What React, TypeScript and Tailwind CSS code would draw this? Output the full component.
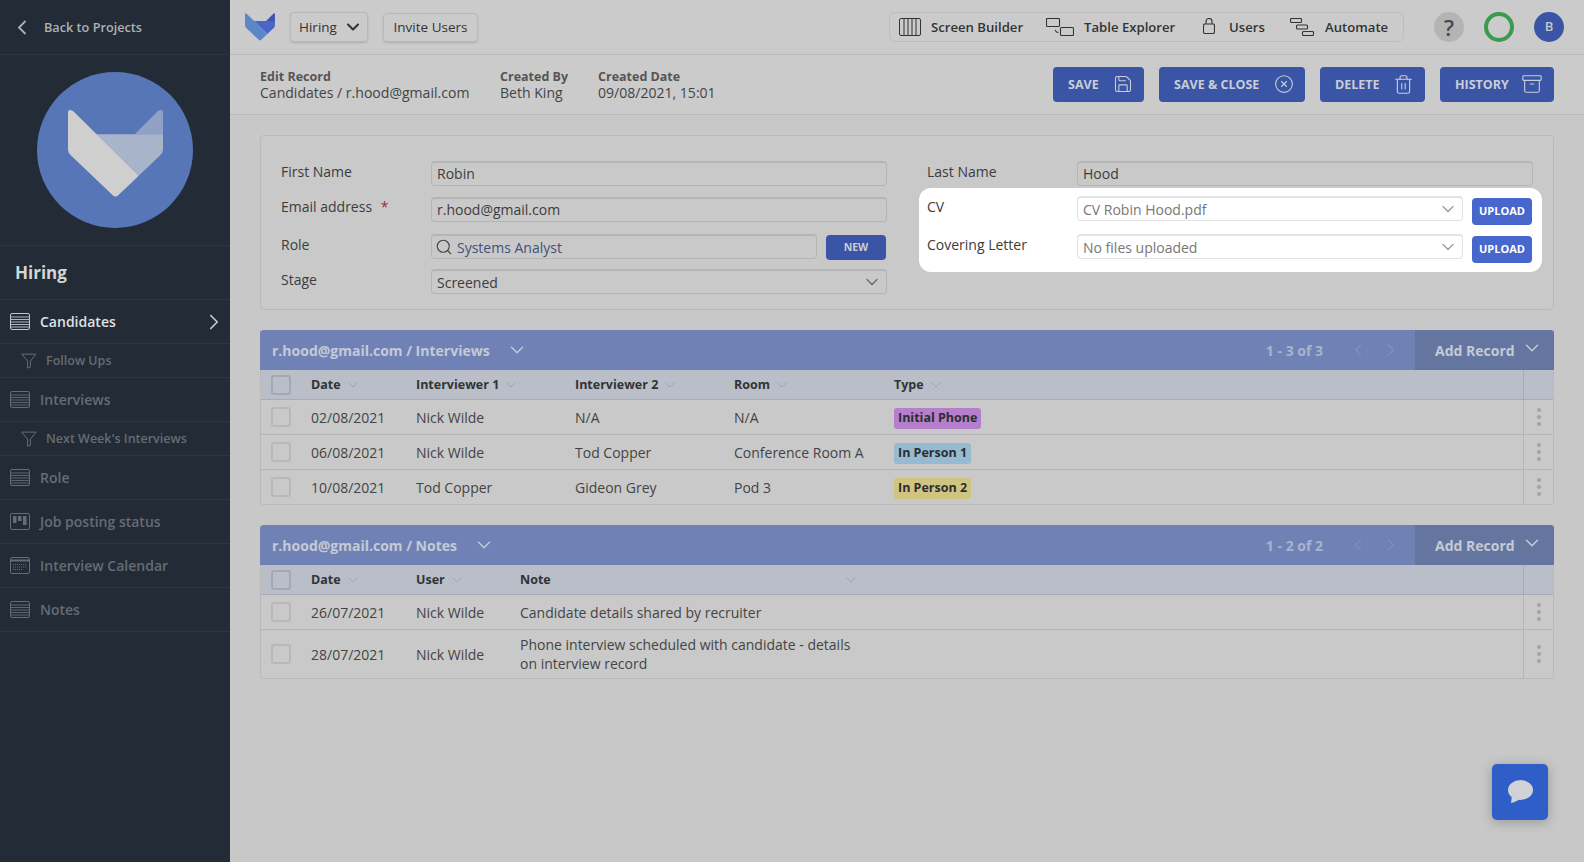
import React from "react";
import { ChevronLeft, ChevronRight, ChevronDown, Search, Save, CircleX, Trash2, Archive } from "lucide-react";

function Fox({ a, b, c, className }: { a: string; b: string; c: string; className: string }) {
  return (
    <svg viewBox="0 0 94 88" className={className}>
      <path d="M66 25 L89 2 Q94 -1 94 4 V25 Z" fill={c} />
      <path d="M28 25 H94 V40 Q94 43 91 46 L70 66 Z" fill={b} />
      <path d="M0 4 Q0 -1 5 2 L70 66 L50 85 Q47 88 44 85 L3 46 Q0 43 0 40 Z" fill={a} />
    </svg>
  );
}

function GridIcon({ kind, color }: { kind: "table" | "board" | "cal"; color: string }) {
  return (
    <svg viewBox="0 0 20 17" className="w-5 h-[17px] shrink-0" fill="none" stroke={color}>
      <rect x="0.5" y="0.5" width="19" height="16" rx="1.5" />
      {kind === "table" && (
        <g strokeWidth="0.9">
          <path d="M1 4h18M1 6.5h18M1 9h18M1 11.5h18M1 14h18" />
        </g>
      )}
      {kind === "board" && (
        <g fill={color} stroke="none">
          <rect x="3" y="3" width="3.5" height="7" />
          <rect x="8" y="3" width="3.5" height="5" />
          <rect x="13" y="3" width="3.5" height="9" />
        </g>
      )}
      {kind === "cal" && (
        <g>
          <path d="M1 3.5h18" strokeWidth="2" />
          <path d="M3 7.5h14M3 10h14M3 12.5h9" strokeWidth="1.2" strokeDasharray="1 1" />
        </g>
      )}
    </svg>
  );
}

function Funnel() {
  return (
    <svg viewBox="0 0 17 16" className="w-4 h-4 shrink-0" fill="none" stroke="#6c7079" strokeWidth="1">
      <path d="M0.7 0.7 H16 L10 8 V14.5 L7 15.5 V8 Z" strokeLinejoin="round" />
    </svg>
  );
}

function Main({ icon, label, active }: { icon: "table" | "board" | "cal"; label: string; active?: boolean }) {
  return (
    <div className={`flex items-center h-11 pl-[10px] pr-[10px] border-b border-[#2c3642] text-sm font-semibold ${active ? "text-[#dfe1e3]" : "text-[#666c75]"}`}>
      <GridIcon kind={icon} color={active ? "#c5c7c9" : "#666c75"} />
      <span className="ml-[10px] flex-1">{label}</span>
      {active && <ChevronRight className="w-[26px] h-[26px] -mr-[7px] text-[#c5c7c9]" strokeWidth={1.6} />}
    </div>
  );
}

function Sub({ label }: { label: string }) {
  return (
    <div className="flex items-center h-[34px] pl-[21px] border-b border-[#2c3642] text-[12.5px] font-semibold text-[#666c75]">
      <Funnel />
      <span className="ml-[9px] mt-[1px]">{label}</span>
    </div>
  );
}

function Sidebar() {
  return (
    <aside className="w-[230px] shrink-0 bg-[#222b36] flex flex-col">
      <div className="flex items-center h-[55px] pl-[17px] border-b border-[#2c3642] text-[12.7px] font-semibold text-[#aeb1b5]">
        <svg viewBox="0 0 10 15" className="w-[10px] h-[15px] mr-[17px]" fill="none" stroke="#aeb1b5" strokeWidth="1.8">
          <path d="M8.5 1 L2 7.5 L8.5 14" />
        </svg>
        <span className="mt-[1px]">Back to Projects</span>
      </div>
      <div className="h-[191px] flex items-center justify-center border-b border-[#2c3642] pb-[1px]">
        <div className="w-[156px] h-[156px] rounded-full bg-[#5776b8] flex items-center justify-center">
          <Fox a="#cfcfcf" b="#a8b4ca" c="#8fa1c6" className="w-[95px] h-[89px] mt-[8px]" />
        </div>
      </div>
      <div className="h-[54px] flex items-center pl-[15px] border-b border-[#2c3642] text-[17px] font-bold text-[#d4d5d7]"><span className="mt-[1px]">Hiring</span></div>
      <Main icon="table" label="Candidates" active />
      <Sub label="Follow Ups" />
      <Main icon="table" label="Interviews" />
      <Sub label="Next Week's Interviews" />
      <Main icon="table" label="Role" />
      <Main icon="board" label="Job posting status" />
      <Main icon="cal" label="Interview Calendar" />
      <Main icon="table" label="Notes" />
    </aside>
  );
}

function Tool({ icon, label, className }: { icon: React.ReactNode; label: string; className: string }) {
  return (
    <div className={`flex items-center ${className}`}>
      {icon}
      <span className="text-[13.15px] font-semibold text-[#333] mt-[1px]">{label}</span>
    </div>
  );
}

function TopBar() {
  return (
    <header className="h-[55px] border-b border-[#b9b9b9] flex items-center bg-[#cbcbcb] shrink-0">
      <Fox a="#5b87c7" b="#4a66c4" c="#3f55ab" className="w-[30px] h-[28px] ml-[15px]" />
      <div className="ml-[15px] w-[78px] h-[30px] flex items-center justify-between pl-[8px] pr-[4px] rounded border border-[#b8b8b8] shadow-[0_1px_2px_rgba(0,0,0,0.15)] text-[13.5px] text-[#333]">
        <span className="mt-[1px]">Hiring</span>
        <ChevronDown className="w-[20px] h-[20px]" strokeWidth={2.5} />
      </div>
      <div className="ml-[15px] w-[95px] h-[29px] flex items-center justify-center rounded border border-[#b8b8b8] shadow-[0_1px_2px_rgba(0,0,0,0.15)] text-[13.5px] text-[#333]"><span className="mt-[1px]">Invite Users</span></div>
      <div className="flex-1" />
      <div className="h-[30px] w-[515px] rounded-md border border-[#bdbdbd] flex items-center pl-[9px]">
        <Tool
          className="w-[147px]"
          label="Screen Builder"
          icon={
            <svg viewBox="0 0 22 18" className="w-[22px] h-[18px] mr-[10px]" fill="none" stroke="#333">
              <rect x="0.5" y="0.5" width="21" height="17" rx="1.5" />
              <path d="M5 1v16M9 1v16M13 1v16M17 1v16" />
            </svg>
          }
        />
        <Tool
          className="w-[157px]"
          label="Table Explorer"
          icon={
            <svg viewBox="0 0 28 18" className="w-[28px] h-[18px] mr-[10px]" fill="none" stroke="#333" strokeWidth="1.1">
              <rect x="0.5" y="0.5" width="13" height="8" rx="1" />
              <rect x="14.5" y="9.5" width="13" height="8" rx="1" />
              <path d="M9 12l1.5 2 2 .5" />
            </svg>
          }
        />
        <Tool
          className="w-[87px]"
          label="Users"
          icon={
            <svg viewBox="0 0 12 16" className="w-[12px] h-[16px] mr-[14px] -mt-[1px]" fill="none" stroke="#333" strokeWidth="1.1">
              <rect x="0.5" y="6" width="11" height="9.5" rx="1.5" />
              <path d="M3 6V3.5a3 3 0 0 1 6 0V6" />
            </svg>
          }
        />
        <Tool
          className=""
          label="Automate"
          icon={
            <svg viewBox="0 0 24 18" className="w-6 h-[18px] mr-[11px]" fill="none" stroke="#333" strokeWidth="1.1">
              <rect x="0.5" y="0.5" width="11" height="4" rx="1" />
              <rect x="6.5" y="7" width="11" height="4" rx="1" />
              <rect x="12.5" y="13.5" width="11" height="4" rx="1" />
            </svg>
          }
        />
      </div>
      <div className="ml-[30px] w-[30px] h-[30px] rounded-full bg-[#b4b4b4] flex items-center justify-center text-[22px] font-semibold text-[#4a4a4a]">?</div>
      <div className="ml-[20px] w-[30px] h-[30px] rounded-full border-[4px] border-[#3b9a4d]" />
      <div className="ml-[20px] mr-[20px] w-[30px] h-[30px] rounded-full bg-[#3a55a5] flex items-center justify-center text-[13px] font-semibold text-[#c5c8d2]">B</div>
    </header>
  );
}

function ActionBtn({ label, width, icon }: { label: string; width: string; icon: React.ReactNode }) {
  return (
    <div className={`${width} h-[35px] rounded bg-[#3a55a5] flex items-center justify-between pl-[15px] pr-[11px] text-[12.5px] font-bold text-[#c9cdd8]`}>
      <span className="mt-[2px]">{label}</span>
      {icon}
    </div>
  );
}

function SubHeader() {
  const Meta = ({ t, v, className }: { t: string; v: string; className: string }) => (
    <div className={className}>
      <div className="text-[12.5px] leading-[18px] font-bold text-[#555]">{t}</div>
      <div className="text-[14.05px] leading-[18px] text-[#444] -mt-[2px]">{v}</div>
    </div>
  );
  return (
    <div className="h-[60px] border-b border-[#b9b9b9] flex items-center pl-[30px] pr-[30px] bg-[#cbcbcb] shrink-0">
      <Meta t="Edit Record" v="Candidates / r.hood@gmail.com" className="w-[240px]" />
      <Meta t="Created By" v="Beth King" className="w-[98px]" />
      <Meta t="Created Date" v="09/08/2021, 15:01" className="" />
      <div className="flex-1" />
      <div className="flex gap-[15px] mt-[-1px]">
        <ActionBtn label="SAVE" width="w-[91px]" icon={<Save className="w-[20px] h-[20px]" strokeWidth={1.3} />} />
        <ActionBtn label="SAVE & CLOSE" width="w-[146px]" icon={<CircleX className="w-[20px] h-[20px]" strokeWidth={1.3} />} />
        <ActionBtn label="DELETE" width="w-[105px]" icon={<Trash2 className="w-[21px] h-[21px]" strokeWidth={1.3} />} />
        <ActionBtn label="HISTORY" width="w-[114px]" icon={<Archive className="w-[22px] h-[22px]" strokeWidth={1.2} />} />
      </div>
    </div>
  );
}

function Field({ value, className = "", chevron, light }: { value: string; className?: string; chevron?: boolean; light?: boolean }) {
  return (
    <div className={`h-[25px] flex items-center justify-between px-[5px] rounded-sm border-t-2 border-x border-b ${light ? "bg-white border-[#e2e2e2] text-[#777]" : "bg-[#c9c9c9] border-[#b5b5b5] text-[#3c3c3c]"} text-[14px] ${className}`}>
      <span>{value}</span>
      {chevron && <ChevronDown className={`w-[20px] h-[20px] -mr-[1px] ${light ? "text-[#9a9a9a]" : "text-[#666]"}`} strokeWidth={1.5} />}
    </div>
  );
}

function Label({ text, className = "" }: { text: string; className?: string }) {
  return <div className={`w-[150px] shrink-0 text-[14px] text-[#3c3c3c] ${className}`}>{text}</div>;
}

function Upload() {
  return <div className="ml-[9px] w-[60px] h-[27px] mt-[2px] rounded-sm bg-[#4767cc] flex items-center justify-center text-[11px] font-bold text-white">UPLOAD</div>;
}

function FormPanel() {
  return (
    <section className="h-[175px] rounded border border-[#b9b9b9] bg-[#c9c9c9] flex pl-[20px] pr-[21px] pt-[25px] gap-[41px]">
      <div className="w-[605px] shrink-0 flex flex-col">
        <div className="flex items-start h-[25px]">
          <Label text="First Name" />
          <Field value="Robin" className="flex-1 -mr-[1px] [&>span]:-mt-[2px]" />
        </div>
        <div className="flex items-start h-[25px] mt-[11px]">
          <div className="w-[150px] shrink-0 text-[14px] text-[#3c3c3c] -mt-[1px]">Email address <span className="text-[#a03030] ml-[5px]">*</span></div>
          <Field value="r.hood@gmail.com" className="flex-1 -mr-[1px] [&>span]:-mt-[2px]" />
        </div>
        <div className="flex items-start h-[25px] mt-[12px]">
          <Label text="Role" />
          <div className="flex-1 h-[25px] flex items-center px-[3px] rounded-sm border-t-2 border-x border-b border-[#b5b5b5] text-[14px] text-[#45507a]">
            <Search className="w-[18px] h-[18px] mr-[4px] text-[#444]" strokeWidth={1.5} />
            Systems Analyst
          </div>
          <div className="ml-[9px] w-[60px] h-[25px] mt-[1px] rounded-sm bg-[#3a55a5] flex items-center justify-center text-[10.5px] font-bold text-[#c9cdd8]">NEW</div>
        </div>
        <div className="flex items-start h-[25px] mt-[10px]">
          <Label text="Stage" />
          <Field value="Screened" className="flex-1 -mr-[1px]" chevron />
        </div>
      </div>
      <div className="flex-1 flex flex-col">
        <div className="flex items-start h-[25px]">
          <Label text="Last Name" />
          <Field value="Hood" className="flex-1 -mr-[1px] [&>span]:-mt-[2px]" />
        </div>
        <div className="-ml-[8px] -mr-[10px] mt-[2px] h-[84px] rounded-[12px] bg-white pl-[8px] pr-[10px] pt-[8px]">
          <div className="flex items-start h-[25px]">
            <Label text="CV" />
            <Field value="CV Robin Hood.pdf" className="flex-1" chevron light />
            <Upload />
          </div>
          <div className="flex items-start h-[25px] mt-[13px]">
            <Label text="Covering Letter" />
            <Field value="No files uploaded" className="flex-1" chevron light />
            <Upload />
          </div>
        </div>
      </div>
    </section>
  );
}

function Check({ header }: { header?: boolean }) {
  return <div className={`w-[20px] h-[20px] rounded-[3px] border-2 ${header ? "border-[#a3a8b3]" : "border-[#b8b8b8]"}`} />;
}

function Dots() {
  return (
    <div className="w-[30px] shrink-0 self-stretch border-l border-[#b5b5b5] flex flex-col items-center justify-center gap-[3px]">
      <span className="w-1 h-1 rounded-full bg-[#a3a3a3]" />
      <span className="w-1 h-1 rounded-full bg-[#a3a3a3]" />
      <span className="w-1 h-1 rounded-full bg-[#a3a3a3]" />
    </div>
  );
}

type Col = { title: string; w: string; caretEnd?: boolean };

function DataTable({ title, pager, cols, rows }: { title: string; pager: string; cols: Col[]; rows: { h: string; cells: React.ReactNode[] }[] }) {
  return (
    <section className="rounded-b border border-t-0 border-[#b9b9b9] bg-[#c9c9c9]">
      <div className="h-10 flex items-center bg-[#7082b5] text-[#c5cad6] -mx-[1px] rounded-t">
        <span className="ml-[12px] text-[14px] font-bold">{title}</span>
        <ChevronDown className="w-[22px] h-[22px] ml-[16px]" strokeWidth={1.5} />
        <div className="flex-1" />
        <span className="text-[14px] font-bold text-[#a9b3cd] mt-[1px]">{pager}</span>
        <ChevronLeft className="w-[20px] h-[20px] ml-[25px] text-[#8091bd]" strokeWidth={1.5} />
        <ChevronRight className="w-[20px] h-[20px] ml-[13px] mr-[14px] text-[#8091bd]" strokeWidth={1.5} />
        <div className="w-[139px] self-stretch bg-[#6475a0] flex items-center pl-[20px] text-[14px] font-bold text-[#c5cad6] rounded-tr">
          <span>Add Record</span>
          <ChevronDown className="w-[22px] h-[22px] ml-[6px] -mt-[5px]" strokeWidth={1.6} />
        </div>
      </div>
      <div className="h-[30px] flex items-center bg-[#b9bec9] border-b border-[#a6abb6]">
        <div className="w-[50px] shrink-0 pl-[10px]"><Check header /></div>
        <div className="flex-1 flex items-center mt-[1px]">
          {cols.map((c) => (
            <div key={c.title} className={`${c.w} shrink-0 flex items-center text-[12.5px] font-bold text-[#333]`}>
              <span className={c.caretEnd ? "flex-1" : ""}>{c.title}</span>
              <ChevronDown className={`w-[16px] h-[16px] text-[#9ea3ae] ${c.caretEnd ? "mr-[6px]" : "ml-[4px]"}`} strokeWidth={1.5} />
            </div>
          ))}
        </div>
        <div className="w-[30px] shrink-0 self-stretch border-l border-[#a6abb6]" />
      </div>
      {rows.map((r, i) => (
        <div key={i} className={`${r.h} flex items-center ${i < rows.length - 1 ? "border-b border-[#b5b5b5]" : ""} text-[14px] text-[#444]`}>
          <div className="w-[50px] shrink-0 pl-[10px]"><Check /></div>
          <div className="flex-1 flex items-center">
            {r.cells.map((c, j) => (
              <div key={j} className={`${cols[j].w} shrink-0`}>{c}</div>
            ))}
          </div>
          <Dots />
        </div>
      ))}
    </section>
  );
}

function Badge({ text, bg }: { text: string; bg: string }) {
  return <span className={`inline-block h-[21px] leading-[20px] px-1 rounded-[3px] text-[12.5px] font-bold text-[#2d2d33] ${bg}`}>{text}</span>;
}

export default function App() {
  const icols: Col[] = [
    { title: "Date", w: "w-[105px]" },
    { title: "Interviewer 1", w: "w-[159px]" },
    { title: "Interviewer 2", w: "w-[159px]" },
    { title: "Room", w: "w-[160px]" },
    { title: "Type", w: "w-[160px]" },
  ];
  const ncols: Col[] = [
    { title: "Date", w: "w-[105px]" },
    { title: "User", w: "w-[104px]" },
    { title: "Note", w: "w-[345px]", caretEnd: true },
  ];
  return (
    <div className="w-[1584px] h-[862px] flex overflow-hidden bg-[#c8c8c8] font-['Open_Sans',sans-serif]">
      <Sidebar />
      <div className="flex-1 flex flex-col min-w-0">
        <TopBar />
        <SubHeader />
        <main className="flex-1 pl-[30px] pr-[30px] pt-[20px] flex flex-col">
          <FormPanel />
          <div className="h-5 shrink-0" />
          <DataTable
            title="r.hood@gmail.com / Interviews"
            pager="1 - 3 of 3"
            cols={icols}
            rows={[
              { h: "h-[35px]", cells: ["02/08/2021", "Nick Wilde", "N/A", "N/A", <Badge text="Initial Phone" bg="bg-[#b57fcb]" />] },
              { h: "h-[35px]", cells: ["06/08/2021", "Nick Wilde", "Tod Copper", "Conference Room A", <Badge text="In Person 1" bg="bg-[#96bbd0]" />] },
              { h: "h-[34px]", cells: ["10/08/2021", "Tod Copper", "Gideon Grey", "Pod 3", <Badge text="In Person 2" bg="bg-[#cfc581]" />] },
            ]}
          />
          <div className="h-5 shrink-0" />
          <DataTable
            title="r.hood@gmail.com / Notes"
            pager="1 - 2 of 2"
            cols={ncols}
            rows={[
              { h: "h-[35px]", cells: ["26/07/2021", "Nick Wilde", "Candidate details shared by recruiter"] },
              { h: "h-[48px]", cells: ["28/07/2021", "Nick Wilde", <div className="leading-[19px]">Phone interview scheduled with candidate - details<br />on interview record</div>] },
            ]}
          />
        </main>
      </div>
      <div className="fixed left-[1492px] top-[764px] w-14 h-14 rounded-[5px] bg-[#2f5ec8] shadow-[0_2px_12px_rgba(0,0,0,0.25)] flex items-center justify-center">
        <svg viewBox="0 0 26 24" className="w-[26px] h-6" fill="#d0d2d6">
          <ellipse cx="13.5" cy="10" rx="12.5" ry="10" />
          <path d="M5 15 L4 23 Q9 22 13 19 Z" />
        </svg>
      </div>
    </div>
  );
}
